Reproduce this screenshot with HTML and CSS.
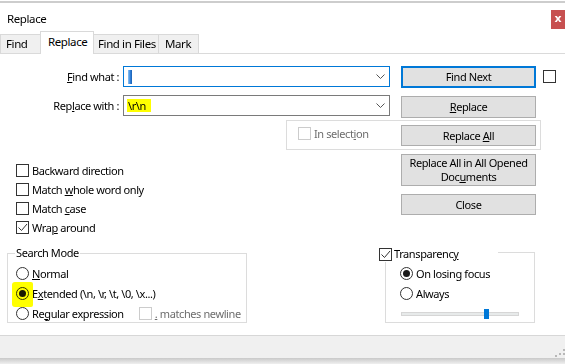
FILE: index.html
```html
<!DOCTYPE html>
<html>
<head>
<meta charset="utf-8">
<link rel="stylesheet" href="styles.css">
</head>
<body>
<div class="win">
  <div class="titlebar">
    <span class="title">Replace</span>
    <span class="close">x</span>
  </div>
  <div class="tabs">
    <div class="tab t-find">Find</div>
    <div class="tab t-replace active">Replace</div>
    <div class="tab t-files">Find in Files</div>
    <div class="tab t-mark">Mark</div>
  </div>
  <div class="panel">
    <div class="row r1">
      <span class="lbl"><u>F</u>ind what :</span>
      <div class="combo focused">
        <span class="sel"></span>
        <svg class="chev" width="9" height="5" viewBox="0 0 9 5"><path d="M0.5 0.5 L4.5 4.5 L8.5 0.5" fill="none" stroke="#555" stroke-width="1"/></svg>
      </div>
      <div class="btn default">Find Next</div>
      <span class="cb side"></span>
    </div>
    <div class="row r2">
      <span class="lbl">Rep<u>l</u>ace with :</span>
      <div class="combo">
        <span class="hl-text">\r\n<span class="marker m-text"></span></span>
        <svg class="chev" width="9" height="5" viewBox="0 0 9 5"><path d="M0.5 0.5 L4.5 4.5 L8.5 0.5" fill="none" stroke="#555" stroke-width="1"/></svg>
      </div>
      <div class="btn"><u>R</u>eplace</div>
    </div>
    <div class="selgroup">
      <span class="cb dis"></span>
      <span class="dis-txt">In select<u>i</u>on</span>
      <div class="btn">Replace <u>A</u>ll</div>
    </div>
    <div class="mid">
      <div class="opts">
        <div class="opt"><span class="cb"></span><span>Backward direction</span></div>
        <div class="opt"><span class="cb"></span><span>Match <u>w</u>hole word only</span></div>
        <div class="opt"><span class="cb"></span><span>Match <u>c</u>ase</span></div>
        <div class="opt"><span class="cb"><svg width="11" height="11" viewBox="0 0 11 11"><path d="M1.5 5.5 L4.5 8.5 L10 2" fill="none" stroke="#333" stroke-width="1"/></svg></span><span>Wra<u>p</u> around</span></div>
      </div>
      <div class="actions">
        <div class="btn tall">Replace All in All Opened<br>Doc<u>u</u>ments</div>
        <div class="btn">Close</div>
      </div>
    </div>
    <div class="bottom">
      <div class="group mode">
        <span class="legend">Search Mode</span>
        <div class="opt radio-row"><span class="radio"></span><span><u>N</u>ormal</span></div>
        <div class="opt radio-row ext"><span class="radio on"></span><span>E<u>x</u>tended (\n, \r, \t, \0, \x...)</span><span class="marker m-radio"></span></div>
        <div class="opt radio-row"><span class="radio"></span><span>Re<u>g</u>ular expression</span><span class="cb dis nl"></span><span class="dis-txt"><u>.</u> matches newline</span></div>
      </div>
      <div class="group transp">
        <span class="legend tlegend"><span class="cb"><svg width="11" height="11" viewBox="0 0 11 11"><path d="M1.5 5.5 L4.5 8.5 L10 2" fill="none" stroke="#333" stroke-width="1"/></svg></span><span>Transparenc<u>y</u></span></span>
        <div class="opt radio-row"><span class="radio on"></span><span>On losing focus</span></div>
        <div class="opt radio-row"><span class="radio"></span><span>Always</span></div>
        <div class="slider"><span class="track"></span><span class="thumb" style="left:70%"></span></div>
      </div>
    </div>
  </div>
  <div class="footer">
    <svg class="grip" width="10" height="8" viewBox="0 0 10 8"><rect x="8" y="0" width="2" height="2" fill="#b8b8b8"/><rect x="4" y="4" width="2" height="2" fill="#b8b8b8"/><rect x="8" y="4" width="2" height="2" fill="#b8b8b8"/><rect x="0" y="6" width="2" height="2" fill="#b8b8b8"/></svg>
  </div>
  <div class="shadow"></div>
</div>
</body>
</html>
```

FILE: styles.css
```css
* { box-sizing: border-box; margin: 0; padding: 0; }
html, body { width: 565px; height: 364px; overflow: hidden; background: #fff; }
body { font-family: "Noto Sans", sans-serif; font-size: 11px; letter-spacing: -0.4px; color: #000; white-space: nowrap; }
u { text-decoration: underline; text-underline-offset: 1px; }

.win { margin-top: 1px; border-top: 2px solid #cdcdcd; height: 363px; display: flex; flex-direction: column; }

.titlebar { height: 28px; display: flex; justify-content: space-between; align-items: flex-start; flex: none; }
.title { margin: 8px 0 0 7px; line-height: 16px; font-size: 11.5px; }
.close { margin-top: 7px; width: 14px; height: 19px; background: #c75050; color: #fff; font-weight: bold; font-size: 11px; line-height: 18px; text-align: center; font-family: "DejaVu Sans", sans-serif; letter-spacing: 0; }

.tabs { height: 23px; border-bottom: 1px solid #dadada; display: flex; align-items: flex-end; flex: none; }
.tab { height: 19px; background: #f0f0f0; border: 1px solid #d9d9d9; border-bottom: none; line-height: 18px; padding-left: 4px; margin-left: -1px; font-size: 11.5px; }
.t-find { width: 41px; margin-left: 0; padding-left: 5px; }
.t-replace { width: 54px; padding-left: 7px; }
.t-files { width: 66px; padding-left: 4px; }
.t-mark { width: 41px; padding-left: 6px; }
.tab.active { height: 23px; background: #fff; margin-bottom: -1px; position: relative; z-index: 1; line-height: 20px; }

.panel { flex: none; height: 281px; display: flex; flex-direction: column; }

.row { display: flex; align-items: flex-start; }
.r1 { margin-top: 12px; height: 22px; }
.r2 { margin-top: 7px; height: 23px; }
.lbl { width: 119px; text-align: right; line-height: 21px; }
.combo { margin-left: 4px; width: 267px; height: 21px; border: 1px solid #7a7a7a; display: flex; align-items: center; justify-content: space-between; padding: 0 4px 0 3px; }
.combo.focused { border-color: #0078d7; }
.sel { display: block; width: 4px; height: 14px; margin-left: 1px; background: linear-gradient(to right, #8cc4f5, #2f7fd8 60%, #1a5fb0); }
.hl-text { position: relative; line-height: 13px; padding: 0 2px 0 1px; }
.marker { position: absolute; background: #ffff00; mix-blend-mode: multiply; }
.m-text { left: 0; top: 0; width: 24px; height: 13px; }
.chev { display: block; }

.btn { width: 135px; height: 22px; background: #e1e1e1; border: 1px solid #adadad; text-align: center; line-height: 19px; flex: none; }
.r1 .btn { margin-left: 11px; }
.r2 .btn { margin-left: 11px; margin-top: 1px; }
.btn.default { border: 2px solid #0078d7; line-height: 18px; }
.cb { display: inline-flex; align-items: center; justify-content: center; width: 13px; height: 13px; border: 1px solid #333; background: #fff; flex: none; }
.cb.side { margin: 4px 0 0 7px; }
.cb.dis { border-color: #cccccc; }
.dis-txt { color: #6d6d6d; }

.selgroup { margin: 2px 0 0 286px; width: 255px; height: 30px; border: 1px solid #dcdcdc; display: flex; align-items: flex-start; padding: 6px 4px 0 11px; }
.selgroup .dis-txt { margin-left: 3px; line-height: 13px; }
.selgroup .btn { margin-left: auto; margin-top: -2px; height: 21px; line-height: 19px; }

.mid { margin-top: 4px; height: 86px; display: flex; }
.opts { margin-left: 16px; width: 385px; padding-top: 10px; }
.opt { display: flex; align-items: center; height: 19px; gap: 3px; }
.opts .opt { align-items: flex-start; }
.opts .opt span:last-child { line-height: 13px; }
.actions { width: 135px; display: flex; flex-direction: column; gap: 8px; }
.btn.tall { height: 32px; line-height: 14px; padding-top: 1px; }
.actions .btn:last-child { height: 21px; }

.bottom { margin-top: 13px; display: flex; align-items: flex-start; }
.group { position: relative; border: 1px solid #dcdcdc; }
.mode { margin-left: 7px; width: 240px; height: 70px; padding: 9px 0 0 8px; }
.transp { margin-left: 138px; margin-top: -1px; width: 150px; height: 71px; padding: 10px 0 0 14px; }
.legend { position: absolute; left: 7px; top: -9px; background: #fff; padding: 0 1px; line-height: 16px; }
.tlegend { left: -7px; top: -7px; width: 119px; padding: 0; display: flex; align-items: center; gap: 2px; }
.radio-row { height: 20px; position: relative; }
.radio { width: 13px; height: 13px; border: 1px solid #333; border-radius: 50%; display: inline-flex; align-items: center; justify-content: center; flex: none; background: #fff; }
.radio.on::after { content: ""; width: 7px; height: 7px; border-radius: 50%; background: #1a1a1a; }
.ext .radio { background: transparent; }
.m-radio { left: -4px; top: -1px; width: 21px; height: 25px; border-radius: 3px 2px 2px 3px; }
.cb.nl { margin-left: 12px; }
.slider { position: relative; width: 118px; height: 10px; margin: 6px 0 0 1px; display: flex; align-items: center; }
.track { display: block; width: 100%; height: 4px; background: #e7eaea; border: 1px solid #d6d6d6; }
.thumb { position: absolute; top: 0; width: 5px; height: 10px; background: #0078d7; }

.footer { flex: none; height: 23px; border-top: 1px solid #d7d7d7; background: #f0f0f0; display: flex; justify-content: flex-end; align-items: flex-end; }
.grip { display: block; margin: 0 0 1px 0; }
.shadow { flex: none; height: 6px; background: linear-gradient(to bottom, #c9c9c9, #efefef); }
```
